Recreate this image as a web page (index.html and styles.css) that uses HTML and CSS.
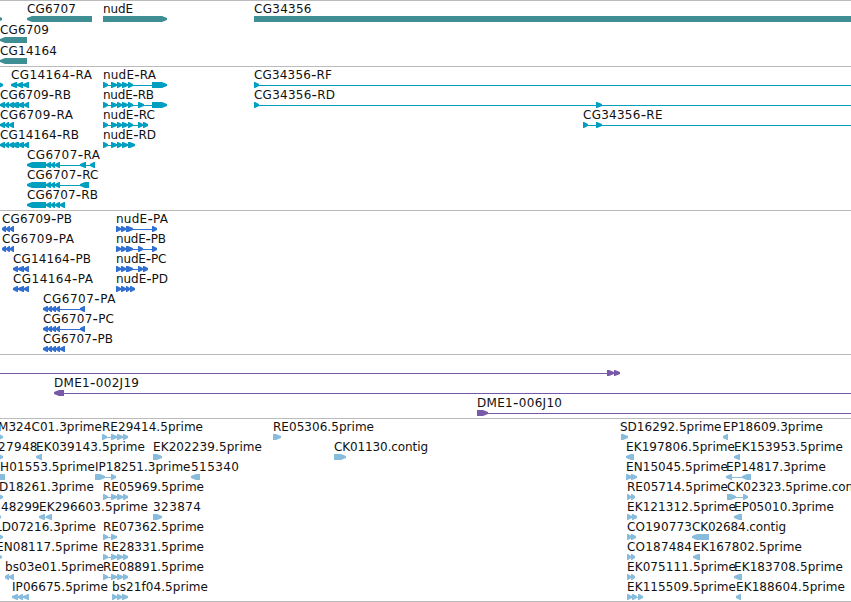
FILE: index.html
```html
<!DOCTYPE html>
<html lang="en">
<head>
<meta charset="utf-8">
<title>Genome browser</title>
<link rel="stylesheet" href="styles.css">
</head>
<body>
<main class="browser">
  <section class="track track--gene"><svg id="genes" class="canvas"></svg></section>
  <section class="track track--transcript"><svg id="transcripts" class="canvas"></svg></section>
  <section class="track track--protein"><svg id="proteins" class="canvas"></svg></section>
  <section class="track track--bac"><svg id="bacs" class="canvas"></svg></section>
  <section class="track track--est"><svg id="ests" class="canvas"></svg></section>
</main>
<script src="tracks.js"></script>
</body>
</html>
```
FILE: styles.css
```css
body {
  margin: 0;
  background: #fff;
  overflow: hidden;
}

.browser {
  display: flex;
  flex-direction: column;
  width: 851px;
  height: 602px;
  box-sizing: border-box;
  border-bottom: 1px solid #bbb;
}

.track {
  box-sizing: border-box;
  border-top: 1px solid #bbb;
}

.track--gene { height: 66px; color: #3e8e94; }
.track--transcript { height: 144px; color: #009fc0; }
.track--protein { height: 144px; color: #316fd0; }
.track--bac { height: 64px; color: #7859a8; }
.track--est { height: 183px; color: #88bcdc; }

.canvas {
  display: block;
  width: 100%;
  height: 100%;
  overflow: visible;
}

.feature { fill: currentColor; }

.intron { shape-rendering: crispEdges; }

.label {
  fill: #111;
  font: 12px "DejaVu Sans", sans-serif;
}

.dash { font-size: 15px; }
```
FILE: tracks.js
```js
const NS = 'http://www.w3.org/2000/svg';

// Feature: [row, direction, blocks, label, label start, label end, line end]
const L = -1, R = 1;
const four = [[103,108],[111,117],[117,123],[123,128]];
const nud = [[103,108],[111,117],[117,122],[122,128],[128,133]];
const cds = [[116,121],[121,126],[126,133]];
const utr = [[27,46],[46,51],[51,55],[55,60]];
const cg = [[0,5],[5,9],[9,14],[12,19],[18,24],[24,29]];
const pro = [[43,48],[48,52],[52,56],[56,60]];

const genes = [
  [0,R,[[-3,2]]],
  [0,L,[[27,92]],'CG6707',27,76],
  [0,R,[[103,167]],'nudE',103,133],
  [0,R,[[254,870]],'CG34356',254,311.5],
  [1,L,[[0,27]],'CG6709',0,49],
  [2,L,[[0,27]],'CG14164',0,57]
];
const transcripts = [
  [0,R,[[-2,3]]],
  [0,L,[[11,17],[17,23],[23,29]],'CG14164-RA',11,92],
  [0,R,[...nud,[152,167]],'nudE-RA',103,156],
  [0,R,[[254,259]],'CG34356-RF',254,332,851],
  [1,L,cg,'CG6709-RB',0,71],
  [1,R,[...nud,[138,144],[152,167]],'nudE-RB',103,154],
  [1,R,[[254,259],[596,602]],'CG34356-RD',254,335,851],
  [2,L,[[0,5],[5,9],[9,14]],'CG6709-RA',0,73],
  [2,R,[...nud,[138,143],[143,148]],'nudE-RC',103,155],
  [2,R,[[583,588],[596,602]],'CG34356-RE',583,662.5,851],
  [3,L,cg,'CG14164-RB',0,79],
  [3,R,[...nud.slice(0,4),[128,135]],'nudE-RD',103,156],
  [4,L,[...utr,[80,86],[90,95]],'CG6707-RA',27,100],
  [5,L,[...utr,[80,89]],'CG6707-RC',27,98.5],
  [6,L,[...utr,[60,65]],'CG6707-RB',27,98]
];
const proteins = [
  [0,L,[[2,6],[6,10],[10,14]],'CG6709-PB',2,72],
  [0,R,[...cds,[152,157]],'nudE-PA',116,168],
  [1,L,[[2,6],[6,10],[10,14]],'CG6709-PA',2,74],
  [1,R,[...cds,[138,143],[152,157]],'nudE-PB',116,166],
  [2,L,[[13,18],[18,24],[24,29]],'CG14164-PB',13,91],
  [2,R,[...cds,[138,143],[143,148]],'nudE-PC',116,166.5],
  [3,L,[[13,18],[18,24],[24,29]],'CG14164-PA',13,93],
  [3,R,[[116,121],[121,126],[126,130],[130,135]],'nudE-PD',116,168],
  [4,L,[...pro,[80,85]],'CG6707-PA',43,115.5],
  [5,L,[...pro,[80,85]],'CG6707-PC',43,114],
  [6,L,[...pro,[60,65]],'CG6707-PB',43,113]
];
const bacs = [
  [0,R,[[-9,-4],[607,614],[614,620]]],
  [1,L,[[54,64]],'DME1-002J19',54,139,851],
  [2,R,[[477,488]],'DME1-006J10',477,562,851]
];
const ests = [
  [0,R,[[-2,3]],'M324C01.3prime',-2,102],
  [0,R,[[102,107],...four.slice(1)],'RE29414.5prime',102,203],
  [0,R,[[273,281]],'RE05306.5prime',273,374],
  [0,R,[[621,628]],'SD16292.5prime',620,721.5],
  [0,L,[[723,728]],'EP18609.3prime',723,823],
  [1,R,[[-2,3]],'27948',-2,37.5],
  [1,L,[[36,42]],'EK039143.5prime',36,145],
  [1,R,[[153,162]],'EK202239.5prime',153,262],
  [1,R,[[334,346]],'CK01130.contig',334,428],
  [1,L,[[626,634]],'EK197806.5prime',626,735],
  [1,L,[[734,740]],'EK153953.5prime',734,843],
  [2,L,[[-9,5]],'H01553.5prime',0,95],
  [2,R,[[95,105],[111,116]],'IP18251.3prime',95,190.5],
  [2,L,[[191,200]],'515340',191,239],
  [2,R,[[626,632],[631,637]],'EN15045.5prime',626,728],
  [2,L,[[726,732],[742,751]],'EP14817.3prime',726,826],
  [3,R,[[-2,3]],'D18261.3prime',-1,94],
  [3,R,four,'RE05969.5prime',103,204],
  [3,R,[[627,631],[631,635]],'RE05714.5prime',627,728],
  [3,R,[[727,736],[743,748]],'CK02323.5prime.contig',727],
  [4,R,[[-3,1]],'48299',1,39.5],
  [4,L,[[39,45],[46,52]],'EK296603.5prime',39,148],
  [4,R,[[153,162]],'323874',153,201],
  [4,R,[[627,632],[632,637]],'EK121312.5prime',627,736],
  [4,L,[[734,742]],'EP05010.3prime',734,834],
  [5,R,[[-2,3]],'LD07216.3prime',-5,96],
  [5,R,[[103,108],[111,117]],'RE07362.5prime',103,204],
  [5,R,[[627,632],[631,636]],'CO190773',627,692],
  [5,L,[[692,709]],'CK02684.contig',692,786],
  [6,R,[[-3,2]],'EN08117.5prime',-4,98],
  [6,R,four,'RE28331.5prime',103,204],
  [6,R,[[627,631],[631,635]],'CO187484',627,692],
  [6,L,[[693,700]],'EK167802.5prime',693,802],
  [7,L,[[5,9],[9,14]],'bs03e01.5prime',5,104],
  [7,R,four,'RE08891.5prime',103,204],
  [7,R,[[627,631],[631,635]],'EK075111.5prime',627,736],
  [7,L,[[734,742]],'EK183708.5prime',734,843],
  [8,L,[[12,18],[18,23],[23,29]],'IP06675.5prime',12,108],
  [8,R,[[112,117],[117,122],[122,128]],'bs21f04.5prime',112,208],
  [8,R,[[627,632],[632,637],[638,643]],'EK115509.5prime',627,736],
  [8,L,[[736,741]],'EK188604.5prime',736,845]
];

function add(parent, tag, attrs) {
  const el = document.createElementNS(NS, tag);
  for (const k in attrs) el.setAttribute(k, attrs[k]);
  parent.appendChild(el);
  return el;
}

// Block with a blunt pointed end; at least one pixel of full height body.
function arrow(a, b, dir, top) {
  const tip = Math.min(b - a - 1, 5), mid = top + 3, end = top + 6;
  const [back, shoulder, point] = dir === R ? [a, b - tip, b] : [b, a + tip, a];
  return `M${back} ${top}H${shoulder}L${point} ${mid - 1}V${mid + 1}L${shoulder} ${end}H${back}Z`;
}

function draw(id, features, pitch) {
  const svg = document.getElementById(id);
  for (const [row, dir, blocks, label, x, end, lineEnd] of features) {
    const y = row * pitch;
    const from = blocks[0][0] + (dir === L ? 3 : 0);
    const to = lineEnd || blocks[blocks.length - 1][1] - 2;
    if (lineEnd || blocks.length > 1)
      add(svg, 'rect', { class: 'feature intron', x: from, y: y + 18, width: to - from, height: 1 });
    for (const [a, b] of blocks)
      add(svg, 'path', { class: 'feature', d: arrow(a, b, dir, y + 15) });
    if (!label) continue;
    const text = add(svg, 'text', { class: 'label', x, y: y + 12 });
    if (end) text.setAttribute('textLength', end - x);
    const [head, tail] = label.split('-');
    text.append(head);
    if (tail) {
      add(text, 'tspan', { class: 'dash', dy: 1 }).textContent = '-';
      add(text, 'tspan', { dy: -1 }).textContent = tail;
    }
  }
}

draw('genes', genes, 21);
draw('transcripts', transcripts, 20);
draw('proteins', proteins, 20);
draw('bacs', bacs, 20);
draw('ests', ests, 20);
```
